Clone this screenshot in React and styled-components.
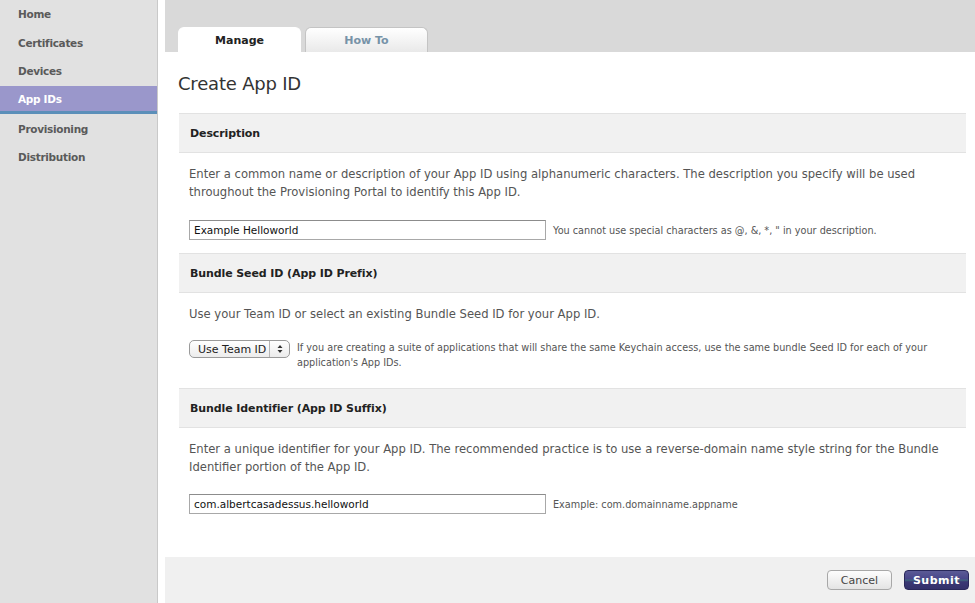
import React from "react";
import styled, { createGlobalStyle } from "styled-components";

const Global = createGlobalStyle`
  html, body { margin: 0; padding: 0; background: #fff; }
  body { font-family: "DejaVu Sans", "Lucida Grande", sans-serif; }
  * { box-sizing: border-box; }
`;

const Page = styled.div`
  display: flex;
  width: 975px;
  height: 603px;
  overflow: hidden;
  background: #fff;
`;

const Sidebar = styled.nav`
  width: 158px;
  flex: none;
  background: #e1e1e1;
  border-right: 1px solid #c9c9c9;
  display: flex;
  flex-direction: column;
`;

const NavItem = styled.div`
  height: 28.6px;
  display: flex;
  align-items: center;
  padding-left: 18px;
  font-size: 10.5px;
  letter-spacing: -0.3px;
  font-weight: bold;
  color: ${(p) => (p.$active ? "#fff" : "#5a5a5a")};
  background: ${(p) => (p.$active ? "#9a97cb" : "transparent")};
  border-bottom: ${(p) => (p.$active ? "3px solid #5b8fb9" : "0")};
`;

const Main = styled.div`
  margin-left: 7px;
  flex: 1;
  display: flex;
  flex-direction: column;
`;

const TabBar = styled.div`
  height: 52px;
  background: #d9d9d9;
  display: flex;
  align-items: flex-end;
  gap: 4px;
  padding-left: 13px;
`;

const Tab = styled.div`
  width: 123px;
  height: 25px;
  border-radius: 6px 6px 0 0;
  display: flex;
  align-items: center;
  justify-content: center;
  font-size: 11px;
  font-weight: bold;
  color: ${(p) => (p.$active ? "#222" : "#7793a8")};
  background: ${(p) =>
    p.$active ? "#fff" : "linear-gradient(#ffffff, #e9e9e9)"};
  border: 1px solid ${(p) => (p.$active ? "#fff" : "#c4c4c4")};
  border-bottom: 0;
`;

const Content = styled.div`
  flex: 1;
  padding: 20px 9px 0 13px;
`;

const Title = styled.h1`
  margin: 0 0 17px 0;
  font-size: 18px;
  letter-spacing: -0.2px;
  font-weight: normal;
  color: #333;
  line-height: 24px;
`;

const SectionHead = styled.div`
  height: 40px;
  background: #f1f1f1;
  border-top: 1px solid #e2e2e2;
  border-bottom: 1px solid #e2e2e2;
  display: flex;
  align-items: center;
  padding-left: 11px;
  margin-left: 1px;
  font-size: 11px;
  letter-spacing: -0.1px;
  font-weight: bold;
  color: #222;
`;

const SectionBody = styled.div`
  padding: 12px 0 ${(p) => p.$pb || 13}px 11px;
`;

const Para = styled.p`
  margin: 0 0 ${(p) => p.$mb || 19}px 0;
  font-size: 11.6px;
  line-height: 18px;
  color: #555;
`;

const FieldRow = styled.div`
  display: flex;
  align-items: ${(p) => (p.$top ? "flex-start" : "center")};
  gap: 7px;
`;

const TextInput = styled.div`
  width: 357px;
  height: 20px;
  border: 1px solid #a8a8a8;
  border-top-color: #8c8c8c;
  display: flex;
  align-items: center;
  padding-left: 4px;
  font-size: 10.5px;
  color: #111;
`;

const Hint = styled.div`
  font-size: 9.7px;
  line-height: 15px;
  color: #555;
`;

const Select = styled.div`
  width: 101px;
  height: 18px;
  flex: none;
  border: 1px solid #9a9a9a;
  border-radius: 5px;
  background: linear-gradient(#ffffff, #ececec);
  display: flex;
  align-items: center;
  font-size: 11px;
  color: #222;
`;

const SelectLabel = styled.span`
  flex: 1;
  padding-left: 8px;
`;

const SelectArrows = styled.span`
  width: 20px;
  height: 100%;
  border-left: 1px solid #b5b5b5;
  display: flex;
  align-items: center;
  justify-content: center;
`;

const Footer = styled.div`
  height: 46px;
  background: #f0f0f0;
  display: flex;
  align-items: center;
  justify-content: flex-end;
  gap: 12px;
  padding-right: 6px;
`;

const Button = styled.div`
  width: 65px;
  height: 20px;
  border-radius: 4px;
  display: flex;
  align-items: center;
  justify-content: center;
  font-size: 11px;
  ${(p) =>
    p.$primary
      ? `
    background: linear-gradient(#5b5a96 0%, #48468a 45%, #3f6c7e 50%, #3a3874 60%, #33316a 100%);
    border: 1px solid #29285a;
    color: #fff;
    font-weight: bold;
    letter-spacing: 0.5px;
  `
      : `
    background: linear-gradient(#fdfdfd, #e4e4e4);
    border: 1px solid #a8a8a8;
    color: #444;
  `}
`;

const navItems = ["Home", "Certificates", "Devices", "App IDs", "Provisioning", "Distribution"];

export default function App() {
  return (
    <Page>
      <Global />
      <Sidebar>
        {navItems.map((n) => (
          <NavItem key={n} $active={n === "App IDs"}>
            {n}
          </NavItem>
        ))}
      </Sidebar>
      <Main>
        <TabBar>
          <Tab $active>Manage</Tab>
          <Tab>How To</Tab>
        </TabBar>
        <Content>
          <Title>Create App ID</Title>

          <SectionHead>Description</SectionHead>
          <SectionBody>
            <Para>
              Enter a common name or description of your App ID using alphanumeric characters. The description you specify will be used
              <br />
              throughout the Provisioning Portal to identify this App ID.
            </Para>
            <FieldRow>
              <TextInput>Example Helloworld</TextInput>
              <Hint>You cannot use special characters as @, &amp;, *, " in your description.</Hint>
            </FieldRow>
          </SectionBody>

          <SectionHead>Bundle Seed ID (App ID Prefix)</SectionHead>
          <SectionBody $pb={18}>
            <Para $mb={17}>Use your Team ID or select an existing Bundle Seed ID for your App ID.</Para>
            <FieldRow $top>
              <Select>
                <SelectLabel>Use Team ID</SelectLabel>
                <SelectArrows>
                  <svg width="6" height="10" viewBox="0 0 6 10">
                    <path d="M0.5 4 L3 1 L5.5 4 Z M0.5 6 L3 9 L5.5 6 Z" fill="#333" />
                  </svg>
                </SelectArrows>
              </Select>
              <Hint>
                If you are creating a suite of applications that will share the same Keychain access, use the same bundle Seed ID for each of your
                <br />
                application's App IDs.
              </Hint>
            </FieldRow>
          </SectionBody>

          <SectionHead>Bundle Identifier (App ID Suffix)</SectionHead>
          <SectionBody>
            <Para $mb={18}>
              Enter a unique identifier for your App ID. The recommended practice is to use a reverse-domain name style string for the Bundle
              <br />
              Identifier portion of the App ID.
            </Para>
            <FieldRow>
              <TextInput>com.albertcasadessus.helloworld</TextInput>
              <Hint>Example: com.domainname.appname</Hint>
            </FieldRow>
          </SectionBody>
        </Content>
        <Footer>
          <Button>Cancel</Button>
          <Button $primary>Submit</Button>
        </Footer>
      </Main>
    </Page>
  );
}
